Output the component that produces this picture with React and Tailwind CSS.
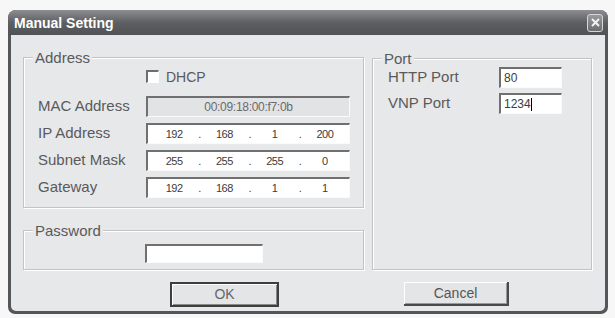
import React from 'react';

const font = "font-['Liberation_Sans',Arial,sans-serif]";

function GroupBox({ label, className, children }) {
  return (
    <div
      className={`relative border border-[#c2c3c5] shadow-[1px_1px_0_#fff,inset_1px_1px_0_#fff] ${className}`}
    >
      <span className="absolute left-[9px] -top-[9px] px-[2px] bg-[#e7e8ea] text-[15px] leading-[17px] text-[#5a5a5a]">
        {label}
      </span>
      {children}
    </div>
  );
}

function Field({ className = '', children }) {
  return (
    <div
      className={`border-t-2 border-l-2 border-[#707070] border-b border-r border-b-[#fafafa] border-r-[#fafafa] ${className}`}
    >
      {children}
    </div>
  );
}

function IpField({ value }) {
  const parts = value.split('.');
  return (
    <Field className="w-[204px] h-[21px] bg-white flex items-center pl-[2px]">
      {parts.map((p, i) => (
        <React.Fragment key={i}>
          <span className="w-[49px] text-center text-[11px] tracking-[-0.5px] text-[#3c3c3c]">{p}</span>
          {i < 3 && <span className="w-[2px] text-[11px] text-[#3c3c3c] leading-none">.</span>}
        </React.Fragment>
      ))}
    </Field>
  );
}

function Row({ label, children }) {
  return (
    <div className="h-[21px] flex items-center">
      <span className="w-[122px] pl-[14px] text-[15px] text-[#5a5a5a] whitespace-nowrap">{label}</span>
      {children}
    </div>
  );
}

export default function App() {
  return (
    <div className={`w-[615px] h-[318px] bg-[#f7f7f7] pt-[10px] pl-[8px] ${font}`}>
      <div className="w-[600px] h-[304px] flex flex-col rounded-t-[8px] rounded-b-[7px] overflow-hidden bg-[#55565a]">
        {/* title bar */}
        <div className="h-[25px] shrink-0 flex items-center justify-between pl-[6px] pr-[5px] bg-gradient-to-b from-[#8d8e91] via-[#5e5f62] to-[#515255]">
          <span className="text-[14px] font-bold text-white leading-none">Manual Setting</span>
          <div className="w-[16px] h-[18px] rounded-[3px] border border-[#d6d6d6] bg-gradient-to-b from-[#9a9a9c] to-[#6c6d70] flex items-center justify-center">
            <svg width="9" height="9" viewBox="0 0 9 9">
              <path d="M1 1 L8 8 M8 1 L1 8" stroke="#f2f2f2" strokeWidth="2" />
            </svg>
          </div>
        </div>

        {/* body */}
        <div className="flex-1 mx-[3px] mb-[3px] bg-[#e7e8ea] rounded-b-[5px] flex flex-col pl-[12px] pr-[13px] pt-[22px]">
          <div className="flex gap-[8px]">
            <div className="w-[341px] flex flex-col">
              <GroupBox label="Address" className="h-[151px]">
                <div className="mt-[12px] ml-[122px] flex items-center gap-[7px] h-[13px]">
                  <div className="w-[13px] h-[13px] bg-white border-t-2 border-l-2 border-[#6e6e6e] border-b border-r border-b-[#fff] border-r-[#fff]" />
                  <span className="text-[14px] leading-none text-[#5a5a5a]">DHCP</span>
                </div>
                <div className="mt-[13px] flex flex-col gap-[6px]">
                  <Row label="MAC Address">
                    <Field className="w-[204px] h-[21px] bg-[#e2e3e5] flex items-center justify-center">
                      <span className="text-[12px] tracking-[-0.3px] text-[#6a6a6a]">00:09:18:00:f7:0b</span>
                    </Field>
                  </Row>
                  <Row label="IP Address">
                    <IpField value="192.168.1.200" />
                  </Row>
                  <Row label="Subnet Mask">
                    <IpField value="255.255.255.0" />
                  </Row>
                  <Row label="Gateway">
                    <IpField value="192.168.1.1" />
                  </Row>
                </div>
              </GroupBox>

              <GroupBox label="Password" className="mt-[22px] h-[40px]">
                <Field className="mt-[13px] ml-[121px] w-[118px] h-[19px] bg-white" />
              </GroupBox>
            </div>

            <GroupBox label="Port" className="mt-[1px] w-[220px] h-[212px]">
              <div className="mt-[8px] flex flex-col gap-[5px]">
                <div className="h-[21px] flex items-center">
                  <span className="w-[126px] pl-[15px] text-[15px] text-[#5a5a5a]">HTTP Port</span>
                  <Field className="w-[63px] h-[21px] bg-white flex items-center pl-[3px]">
                    <span className="text-[12px] text-[#3c3c3c]">80</span>
                  </Field>
                </div>
                <div className="h-[21px] flex items-center">
                  <span className="w-[126px] pl-[15px] text-[15px] text-[#5a5a5a]">VNP Port</span>
                  <Field className="w-[63px] h-[21px] bg-white flex items-center pl-[3px]">
                    <span className="text-[12px] text-[#3c3c3c]">1234</span>
                    <span className="w-[1px] h-[13px] bg-black" />
                  </Field>
                </div>
              </div>
            </GroupBox>
          </div>

          {/* buttons */}
          <div className="mt-[12px] flex items-start">
            <button className="ml-[147px] w-[109px] h-[25px] border-2 border-[#3e3e3e] bg-[#e4e5e7] shadow-[inset_1px_1px_0_#fff,inset_-1px_-1px_0_#8a8a8a] text-[14px] text-[#666]">
              OK
            </button>
            <button className="ml-[125px] w-[105px] h-[24px] bg-[#e4e5e7] border-b-2 border-r-2 border-[#4a4a4a] shadow-[inset_1px_1px_0_#fff,inset_-1px_-1px_0_#9a9a9a] text-[14px] text-[#555]">
              Cancel
            </button>
          </div>
        </div>
      </div>
    </div>
  );
}
